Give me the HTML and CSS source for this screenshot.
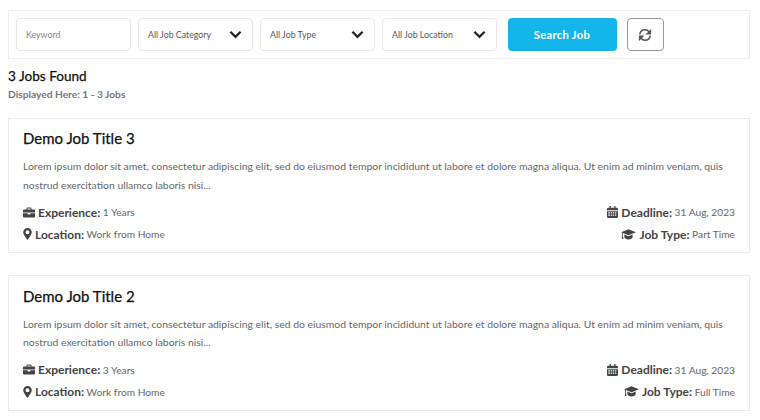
FILE: index.html
```html
<!DOCTYPE html>
<html lang="en">
<head>
<meta charset="utf-8">
<title>Jobs</title>
<link rel="stylesheet" href="styles.css">
</head>
<body>
<form class="filter">
  <div class="field keyword">Keyword</div>
  <div class="field select"><span>All Job Category</span><svg class="chev" viewBox="0 0 14 9"><path d="M1.500 1.500 7 7l5.500-5.500"/></svg></div>
  <div class="field select"><span>All Job Type</span><svg class="chev" viewBox="0 0 14 9"><path d="M1.500 1.500 7 7l5.500-5.500"/></svg></div>
  <div class="field select"><span>All Job Location</span><svg class="chev" viewBox="0 0 14 9"><path d="M1.500 1.500 7 7l5.500-5.500"/></svg></div>
  <button class="search" type="button">Search Job</button>
  <button class="refresh" type="button" aria-label="Reset"><svg viewBox="0 0 16 16"><path class="arc" d="M2 7.200C2.500 4.200 5 2 8 2c1.900 0 3.500.8 4.600 2.200"/><path class="arc" d="M14 8.800C13.500 11.800 11 14 8 14c-1.900 0-3.500-.8-4.600-2.200"/><path d="M15 1v6.500H8.500zM1 15V8.500h6.500z"/></svg></button>
</form>

<h2 class="count">3 Jobs Found</h2>
<p class="shown">Displayed Here: 1 - 3 Jobs</p>

<article class="job">
  <h3>Demo Job Title 3</h3>
  <p class="desc">Lorem ipsum dolor sit amet, consectetur adipiscing elit, sed do eiusmod tempor incididunt ut labore et dolore magna aliqua. Ut enim ad minim veniam, quis nostrud exercitation ullamco laboris nisi...</p>
  <div class="meta">
    <div class="line"><svg class="ico brief" viewBox="0 0 24 20"><path d="M9 0h6a2 2 0 0 1 2 2v2h5a2 2 0 0 1 2 2v4H0V6a2 2 0 0 1 2-2h5V2a2 2 0 0 1 2-2zm0 2v2h6V2zM0 11.500h9.500V14h5v-2.500H24V18a2 2 0 0 1-2 2H2a2 2 0 0 1-2-2z"/></svg><b>Experience:</b> 1 Years</div>
    <div class="line"><svg class="ico cal" viewBox="0 0 13 14"><path d="M3 0h1.500v2h4V0H10v2h1.500A1.500 1.500 0 0 1 13 3.500V5H0V3.500A1.500 1.500 0 0 1 1.500 2H3zM0 6h13v6.500a1.500 1.500 0 0 1-1.500 1.500h-10A1.500 1.500 0 0 1 0 12.500zm1.500 1.300v1.400h2V7.300zm3 0v1.400h1.500V7.300zm2.500 0v1.400h1.500V7.300zm2.500 0v1.400h1.500V7.300zM1.500 10v1.400h2V10zm3 0v1.400h1.500V10zm2.500 0v1.400h1.500V10zm2.500 0v1.400h1.500V10z" fill-rule="evenodd"/></svg><b>Deadline:</b> 31 Aug, 2023</div>
    <div class="line"><svg class="ico pin" viewBox="0 0 10 14"><path fill-rule="evenodd" d="M5 0a5 5 0 0 1 5 5c0 2.300-3 6.500-5 9-2-2.500-5-6.700-5-9a5 5 0 0 1 5-5zm0 2.700a2.300 2.300 0 1 0 0 4.600 2.300 2.300 0 0 0 0-4.600z"/></svg><b>Location:</b> Work from Home</div>
    <div class="line"><svg class="ico cap" viewBox="0 0 20 14"><path d="M10 0 20 4 10 8 2.600 5v3.200l.6 4.800H1l.6-4.800V4.600L0 4zM4.500 7l5.500 2.200L15.500 7v3.500c0 1.500-2.500 3-5.500 3s-5.500-1.500-5.500-3z"/></svg><b>Job Type:</b> Part Time</div>
  </div>
</article>

<article class="job">
  <h3>Demo Job Title 2</h3>
  <p class="desc">Lorem ipsum dolor sit amet, consectetur adipiscing elit, sed do eiusmod tempor incididunt ut labore et dolore magna aliqua. Ut enim ad minim veniam, quis nostrud exercitation ullamco laboris nisi...</p>
  <div class="meta">
    <div class="line"><svg class="ico brief" viewBox="0 0 24 20"><path d="M9 0h6a2 2 0 0 1 2 2v2h5a2 2 0 0 1 2 2v4H0V6a2 2 0 0 1 2-2h5V2a2 2 0 0 1 2-2zm0 2v2h6V2zM0 11.500h9.500V14h5v-2.500H24V18a2 2 0 0 1-2 2H2a2 2 0 0 1-2-2z"/></svg><b>Experience:</b> 3 Years</div>
    <div class="line"><svg class="ico cal" viewBox="0 0 13 14"><path d="M3 0h1.500v2h4V0H10v2h1.500A1.500 1.500 0 0 1 13 3.500V5H0V3.500A1.500 1.500 0 0 1 1.500 2H3zM0 6h13v6.500a1.500 1.500 0 0 1-1.500 1.500h-10A1.500 1.500 0 0 1 0 12.500zm1.500 1.300v1.400h2V7.300zm3 0v1.400h1.500V7.300zm2.500 0v1.400h1.500V7.300zm2.500 0v1.400h1.500V7.300zM1.500 10v1.400h2V10zm3 0v1.400h1.500V10zm2.500 0v1.400h1.500V10zm2.500 0v1.400h1.500V10z" fill-rule="evenodd"/></svg><b>Deadline:</b> 31 Aug, 2023</div>
    <div class="line"><svg class="ico pin" viewBox="0 0 10 14"><path fill-rule="evenodd" d="M5 0a5 5 0 0 1 5 5c0 2.300-3 6.500-5 9-2-2.500-5-6.700-5-9a5 5 0 0 1 5-5zm0 2.700a2.300 2.300 0 1 0 0 4.600 2.300 2.300 0 0 0 0-4.600z"/></svg><b>Location:</b> Work from Home</div>
    <div class="line"><svg class="ico cap" viewBox="0 0 20 14"><path d="M10 0 20 4 10 8 2.600 5v3.200l.6 4.800H1l.6-4.800V4.600L0 4zM4.500 7l5.500 2.200L15.500 7v3.500c0 1.500-2.500 3-5.500 3s-5.500-1.500-5.500-3z"/></svg><b>Job Type:</b> Full Time</div>
  </div>
</article>
</body>
</html>
```

FILE: styles.css
```css
* { box-sizing: border-box; }
html, body { overflow: hidden; height: 100%; }
body {
  margin: 0;
  padding: 10px 10px 0 8px;
  background: #fff;
  font-family: Lato, "Open Sans", sans-serif;
  color: #666;
}
.filter {
  display: flex;
  height: 49px;
  padding: 7px;
  border: 1px solid #eee;
  align-items: stretch;
}
.field {
  display: flex;
  align-items: center;
  justify-content: space-between;
  height: 33px;
  border: 1px solid #e8e8e8;
  border-radius: 4px;
  font-size: 8.800px;
  color: #555;
}
.keyword { width: 115px; padding-left: 9px; color: #888; }
.select { width: 115px; margin-left: 7px; padding: 0 10px 0 9px; }
.chev { width: 13px; height: 9px; fill: none; stroke: #222; stroke-width: 2.400; }
.search {
  width: 109px;
  height: 33px;
  margin-left: 10.500px;
  padding-bottom: 2px;
  border: 0;
  border-radius: 4px;
  background: #13b5ea;
  color: #fff;
  font: 700 11.200px Lato, sans-serif;
  letter-spacing: .3px;
}
.refresh {
  display: flex;
  align-items: center;
  justify-content: center;
  width: 37px;
  height: 33px;
  margin-left: 10px;
  padding: 0;
  background: #fff;
  border: 1px solid #999;
  border-radius: 4px;
}
.refresh svg { width: 14px; height: 14px; fill: #555; }
.refresh .arc { fill: none; stroke: #555; stroke-width: 1.800; }
.count { margin: 8px 0 0; font-size: 13.600px; line-height: 19px; font-weight: 400; -webkit-text-stroke: .25px #111; color: #111; }
.shown { margin: 1px 0 0; font-size: 10.200px; line-height: 15px; font-weight: 700; color: #777; }
.job {
  height: 135.500px;
  margin-top: 15.500px;
  padding: 9.500px 14px 0;
  border: 1px solid #eaeaea;
}
.job + .job { margin-top: 22px; }
h3 { margin: 0; font-size: 15px; line-height: 21px; font-weight: 400; -webkit-text-stroke: .25px #111; color: #111; }
.desc { margin: 8px 0 0; font-size: 10.400px; line-height: 18.500px; color: #666; }
.meta {
  display: grid;
  grid-template-columns: 1fr auto;
  grid-auto-rows: 22px;
  margin-top: 7px;
  font-size: 10.200px;
  align-items: center;
}
.line { display: flex; align-items: center; white-space: pre; }
.line:nth-child(even) { justify-content: flex-end; }
.line b { font-size: 12px; font-weight: 700; color: #444; }
.ico { fill: #444; margin-right: 3px; }
.brief { width: 12px; height: 11px; }
.cal { width: 11px; height: 12px; }
.pin { width: 9px; height: 12px; }
.cap { width: 15px; height: 11px; }
```
